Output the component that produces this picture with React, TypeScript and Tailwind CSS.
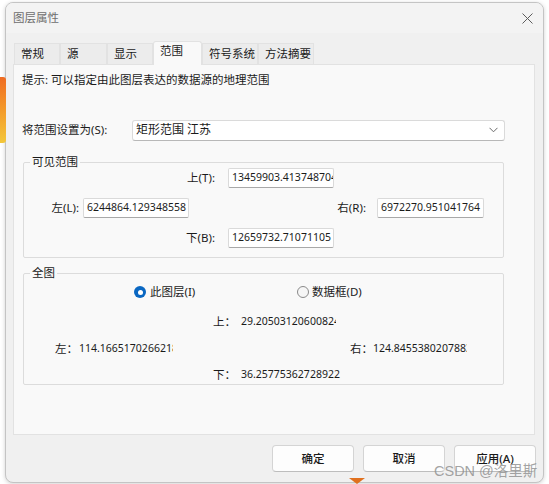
import React from "react";

const Input = ({ value, w }: { value: string; w: string }) => (
  <div
    className={`${w} h-[20px] bg-white border border-[#dadada] border-b-[#a8a8a8] rounded-[2px] flex items-center pl-[3px] overflow-hidden whitespace-nowrap text-[10.5px] text-[#1b1b1b] font-['Noto_Sans',sans-serif]`}
  >
    {value}
  </div>
);

const Num = ({ value, w }: { value: string; w: string }) => (
  <div className={`${w} h-[16px] flex items-center overflow-hidden whitespace-nowrap text-[10.5px] text-[#1b1b1b] font-['Noto_Sans',sans-serif]`}>
    {value}
  </div>
);

const tabs = [
  { t: "常规", w: "w-[46px]" },
  { t: "源", w: "w-[47px]" },
  { t: "显示", w: "w-[46px]" },
  { t: "范围", w: "w-[49px]", sel: true },
  { t: "符号系统", w: "w-[56px]" },
  { t: "方法摘要", w: "w-[56px]" },
];

export default function App() {
  return (
    <div className="relative w-[549px] h-[484px] overflow-hidden bg-white font-['Noto_Sans','Noto_Sans_CJK_SC',sans-serif] text-[11.5px] text-[#1b1b1b]">
      {/* desktop behind the dialog */}
      <div className="absolute left-0 top-[77px] w-[6px] h-[66px] rounded-r-[3px] bg-gradient-to-b from-[#ef6b22] via-[#f39a2a] to-[#f3c73a]" />
      <svg className="absolute left-[349px] top-[478px]" width="16" height="6" viewBox="0 0 16 6">
        <polygon points="0,0 16,0 8,6" fill="#e0701e" />
      </svg>

      {/* dialog */}
      <div className="ml-[5px] mt-[2px] w-[539px] h-[481px] rounded-[8px] border border-[#c4c4c4] bg-[#f0f0f0] shadow-[0_1px_4px_rgba(0,0,0,0.18)] flex flex-col overflow-hidden">
        {/* title bar */}
        <div className="h-[30px] flex items-center justify-between pl-[7px] pr-[10px] bg-[#f3f3f3]">
          <span className="text-[#6e6e6e]">图层属性</span>
          <svg width="11" height="11" viewBox="0 0 11 11">
            <path d="M0.5 0.5 L10.5 10.5 M10.5 0.5 L0.5 10.5" stroke="#5c5c5c" strokeWidth="1" />
          </svg>
        </div>

        {/* tabs */}
        <div className="mt-[8px] ml-[8px] h-[23px] flex items-end relative z-10">
          {tabs.map((tb) =>
            tb.sel ? (
              <div
                key={tb.t}
                className={`${tb.w} h-[24px] -mb-[1px] bg-[#f9f9f9] border border-b-0 border-[#e2e2e2] rounded-t-[3px] pl-[6px] pt-[1px] leading-[16px]`}
              >
                {tb.t}
              </div>
            ) : (
              <div
                key={tb.t}
                className={`${tb.w} h-[21px] bg-[#ececec] border border-[#e2e2e2] border-b-0 pl-[6px] pt-[2px] leading-[16px]`}
              >
                {tb.t}
              </div>
            )
          )}
        </div>

        {/* panel */}
        <div className="ml-[7px] w-[522px] h-[371px] bg-[#f9f9f9] border border-[#e2e2e2] flex flex-col">
          <div className="pl-[8px] pt-[7px] leading-[16px]">提示: 可以指定由此图层表达的数据源的地理范围</div>

          <div className="mt-[32px] pl-[8px] flex items-center h-[20px]">
            <span className="w-[110px]">将范围设置为(S):</span>
            <div className="w-[373px] h-[21px] bg-white border border-[#dadada] border-b-[#b8b8b8] rounded-[3px] flex items-center justify-between pl-[3px] pr-[6px] text-[12px]">
              <span>矩形范围 江苏</span>
              <svg width="9" height="6" viewBox="0 0 9 6">
                <path d="M0.5 0.8 L4.5 4.8 L8.5 0.8" fill="none" stroke="#6a6a6a" strokeWidth="1" />
              </svg>
            </div>
          </div>

          {/* 可见范围 */}
          <div className="relative mt-[22px] ml-[9px] w-[481px] border border-[#dcdcdc] rounded-[2px] pt-[5px] pb-[9px]">
            <span className="absolute -top-[9px] left-[6px] px-[2px] bg-[#f9f9f9] leading-[16px]">可见范围</span>
            <div className="flex items-center h-[20px]">
              <span className="ml-[136px] w-[55px] text-right">上(T):</span>
              <Input value="13459903.413748704" w="ml-[13px] w-[106px]" />
            </div>
            <div className="mt-[10px] flex items-center h-[20px]">
              <span className="ml-[22px] w-[33px] text-right">左(L):</span>
              <Input value="6244864.129348558" w="ml-[4px] w-[106px]" />
              <span className="ml-[140px] w-[37px] text-right">右(R):</span>
              <Input value="6972270.951041764" w="ml-[11px] w-[107px]" />
            </div>
            <div className="mt-[10px] flex items-center h-[20px]">
              <span className="ml-[136px] w-[55px] text-right">下(B):</span>
              <Input value="12659732.71071105" w="ml-[13px] w-[106px]" />
            </div>
          </div>

          {/* 全图 */}
          <div className="relative mt-[15px] ml-[9px] w-[481px] h-[112px] border border-[#dcdcdc] rounded-[2px] pt-[10px]">
            <span className="absolute -top-[9px] left-[6px] px-[2px] bg-[#f9f9f9] leading-[16px]">全图</span>
            <div className="flex items-center h-[16px]">
              <div className="ml-[110px] w-[163px] flex items-center">
                <span className="w-[12px] h-[12px] rounded-full bg-[#0a67c2] flex items-center justify-center">
                  <span className="w-[5px] h-[5px] rounded-full bg-white" />
                </span>
                <span className="ml-[4px]">此图层(I)</span>
              </div>
              <div className="flex items-center">
                <span className="w-[12px] h-[12px] rounded-full border border-[#8a8a8a] bg-[#f6f6f6]" />
                <span className="ml-[3px]">数据框(D)</span>
              </div>
            </div>
            <div className="mt-[14px] flex items-center h-[16px]">
              <span className="ml-[189px] w-[28px]">上：</span>
              <Num value="29.20503120600824" w="w-[95px]" />
            </div>
            <div className="mt-[11px] flex items-center h-[16px]">
              <span className="ml-[31px] w-[24px]">左：</span>
              <Num value="114.16651702662183" w="w-[94px]" />
              <span className="ml-[177px] w-[23px]">右：</span>
              <Num value="124.84553802078832" w="w-[94px]" />
            </div>
            <div className="mt-[10px] flex items-center h-[16px]">
              <span className="ml-[189px] w-[28px]">下：</span>
              <Num value="36.25775362728922" w="w-[100px]" />
            </div>
          </div>
        </div>

        {/* buttons */}
        <div className="mt-[10px] flex justify-end gap-[9px] pr-[7px]">
          {["确定", "取消", "应用(A)"].map((b) => (
            <div
              key={b}
              className="w-[82px] h-[27px] bg-[#fdfdfd] border border-[#d4d4d4] border-b-[#bdbdbd] rounded-[4px] flex items-center justify-center font-medium text-[#1a1a1a]"
            >
              {b}
            </div>
          ))}
        </div>
      </div>

      {/* watermark */}
      <div className="absolute left-[434px] top-[461px] text-[14.5px] leading-[20px] text-[#8c8c8c]/80 font-['Liberation_Sans','Noto_Sans_CJK_SC',sans-serif] whitespace-nowrap">
        CSDN @洛里斯
      </div>
    </div>
  );
}
